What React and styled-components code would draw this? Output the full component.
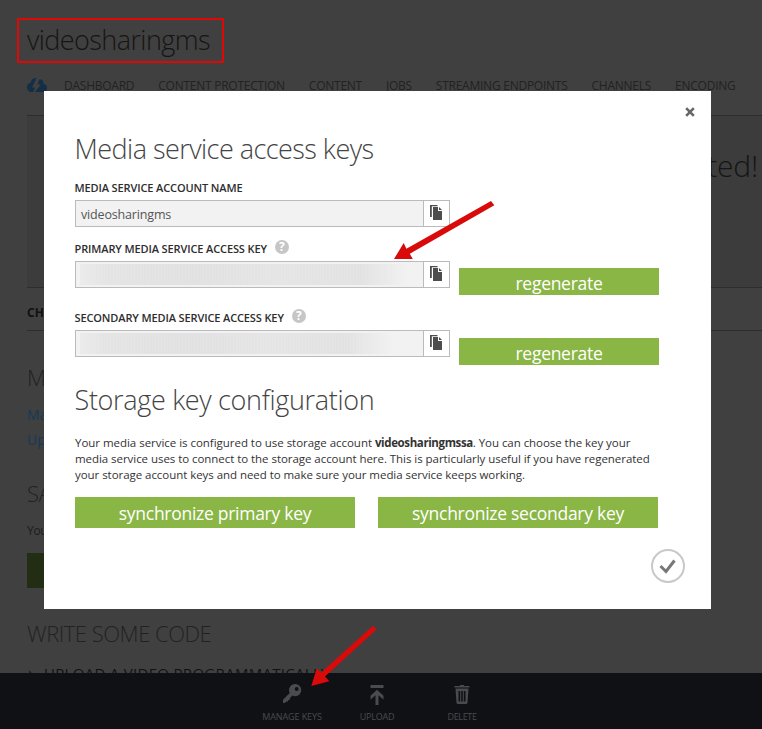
import React from 'react';
import styled, { createGlobalStyle } from 'styled-components';

const GlobalStyle = createGlobalStyle`
  * { box-sizing: border-box; }
  body { margin: 0; background: #404040; }
  h1, h2, h3, p { margin: 0; font-weight: inherit; }
  button { font: inherit; letter-spacing: inherit; border: 0; padding: 0; background: none; }
`;

const Screen = styled.div`
  position: relative;
  width: 762px;
  height: 729px;
  overflow: hidden;
  display: flex;
  flex-direction: column;
  background: #404040;
  color: #1c1c1c;
  font-family: "Open Sans", "Noto Sans", sans-serif;
  white-space: nowrap;
`;

const Page = styled.main`
  height: 673px;
  padding: 19px 0 0 27px;
  overflow: hidden;
`;

const PageTitle = styled.h1`
  font-size: 27px;
  font-weight: 300;
  line-height: 41px;
  letter-spacing: -0.58px;
  color: #151515;
`;

const Nav = styled.nav`
  display: flex;
  align-items: center;
  gap: 24px;
  height: 20px;
  margin-top: 15px;
  font-size: 12px;
  letter-spacing: -0.25px;
  color: #222;
`;

const CloudIcon = styled.svg`
  width: 20px;
  height: 14px;
  margin-right: -7px;
`;

const Banner = styled.section`
  display: flex;
  justify-content: flex-end;
  height: 173px;
  margin-top: 20px;
  padding: 29px 4px 0 0;
  border: solid #2d2d2d;
  border-width: 1px 0;
  background: #3c3c3c;
  font-size: 30px;
  font-weight: 300;
  line-height: 42px;
  letter-spacing: -0.2px;
  color: #151515;
`;

const TabHeading = styled.div`
  height: 43px;
  padding-top: 17px;
  border-bottom: 1px solid #2d2d2d;
  font-size: 12px;
  font-weight: 700;
  line-height: 16px;
  color: #111;
`;

const SectionTitle = styled.h2`
  margin-top: ${(p) => p.$top}px;
  font-size: 22px;
  font-weight: 300;
  line-height: 30px;
  letter-spacing: -0.48px;
  color: #222;
`;

const Links = styled.div`
  display: flex;
  flex-direction: column;
  margin-top: 10px;
  font-size: 14px;
  line-height: 25px;
  color: #143a55;
`;

const Note = styled.p`
  margin-top: 15px;
  font-size: 12px;
  line-height: 16px;
  letter-spacing: -0.3px;
`;

const DimmedButton = styled.div`
  width: 200px;
  height: 35px;
  margin-top: 14px;
  background: #232d13;
`;

const Expander = styled.div`
  display: flex;
  align-items: center;
  gap: 11px;
  height: 20px;
  margin-top: 15px;
  font-size: 15px;
  letter-spacing: 0.3px;
  color: #111;
`;

const Triangle = styled.svg`
  width: 6px;
  height: 8px;
`;

const CommandBar = styled.footer`
  display: flex;
  height: 56px;
  padding-left: 249.5px;
  background: #101115;
`;

const Command = styled.div`
  display: flex;
  flex-direction: column;
  align-items: center;
  width: 85px;
  padding-top: 10px;
  font-size: 9px;
  line-height: 13px;
  letter-spacing: ${(p) => p.$spacing}px;
  color: #4a4b4d;
  svg { width: 22px; height: 24px; margin: 0 1px 3px 0; }
`;

const Dialog = styled.section`
  position: absolute;
  left: 44px;
  top: 91px;
  width: 667px;
  height: 518px;
  padding: 0 26px 0 31px;
  background: #fff;
  color: #333;
`;

const CloseRow = styled.div`
  display: flex;
  justify-content: flex-end;
  align-items: flex-start;
  height: 39px;
  padding-top: 16px;
  svg { width: 10px; height: 10px; margin-right: -10px; }
`;

const DialogTitle = styled.h2`
  margin-top: ${(p) => p.$top || 0}px;
  font-size: 27px;
  font-weight: 300;
  line-height: 38px;
  letter-spacing: ${(p) => p.$spacing}px;
  text-indent: -0.5px;
  color: #444;
`;

const Label = styled.label`
  display: flex;
  gap: 8px;
  height: 16px;
  margin: ${(p) => p.$top}px 0 4px;
  font-size: 11px;
  font-weight: 600;
  line-height: 16px;
  letter-spacing: -0.12px;
  text-indent: -0.5px;
  color: #2d2d2d;
`;

const HelpBadge = styled.span`
  width: 14px;
  height: 14px;
  margin-top: -1px;
  border-radius: 50%;
  background: #c6c6c6;
  color: #fff;
  font-size: 12px;
  font-weight: 700;
  line-height: 14px;
  text-align: center;
  text-indent: 0;
`;

const FieldRow = styled.div`
  display: flex;
  align-items: flex-start;
  gap: 9px;
`;

const Field = styled.div`
  display: flex;
  width: 375px;
  height: 27px;
  border: 1px solid #bbb;
`;

const Value = styled.div`
  flex: 1;
  padding: 2px 0 0 5px;
  background: #f2f2f2;
  font-size: 12.5px;
  line-height: 23px;
  letter-spacing: -0.16px;
  color: #555;
`;

const Redacted = styled.div`
  width: ${(p) => p.$width}px;
  height: 21px;
  margin-left: -1px;
  background:
    repeating-linear-gradient(90deg, rgba(255,255,255,.07) 0 1px, transparent 1px 3px),
    linear-gradient(90deg, #ebebeb, #e4e4e4 8%, #e1e1e1 35%, #e5e5e5 60%, #e2e2e2 85%, #f2f2f2);
`;

const CopyButton = styled.button`
  display: flex;
  width: 26px;
  padding: 4px 0 0 6px;
  border-left: 1px solid #bbb;
  background: #fff;
  svg { width: 13px; height: 16px; }
`;

const GreenButton = styled.button`
  width: ${(p) => p.$width}px;
  height: ${(p) => p.$height}px;
  margin-top: ${(p) => p.$top || 0}px;
  padding-top: ${(p) => p.$drop || 0}px;
  background: #8ab645;
  color: #fff;
  font-size: 17.5px;
  line-height: 27px;
  letter-spacing: -0.28px;
`;

const Description = styled.p`
  margin-top: 16px;
  font-size: 11.5px;
  line-height: 16px;
  letter-spacing: -0.05px;
  color: #333;
  strong { letter-spacing: -0.38px; }
`;

const FirstLine = styled.span`
  letter-spacing: -0.03px;
`;

const SyncRow = styled.div`
  display: flex;
  gap: 23px;
  margin-top: 14px;
`;

const ConfirmRow = styled.div`
  display: flex;
  justify-content: flex-end;
  margin-top: 21px;
  svg { width: 34px; height: 34px; }
`;

const Annotations = styled.svg`
  position: absolute;
  inset: 0;
  width: 762px;
  height: 729px;
  pointer-events: none;
`;

const NAV_ITEMS = ['DASHBOARD', 'CONTENT PROTECTION', 'CONTENT', 'JOBS', 'STREAMING ENDPOINTS', 'CHANNELS', 'ENCODING'];

const CopyIcon = () => (
  <svg viewBox="0 0 13 16">
    <path d="M0 0h7.500v1.200H1.800V12H0z" fill="#4d4d4d" />
    <path d="M3 2h5v4h4v9H3z" fill="#4d4d4d" />
    <path d="M9 2l3 3H9z" fill="#4d4d4d" />
  </svg>
);

const KeyIcon = () => (
  <svg viewBox="0 0 22 24">
    <path fillRule="evenodd" fill="#4a4b4d" d="M14.200 1a6.100 6.100 0 0 1 0 12.200c-1 0-1.900-.2-2.700-.6L8.800 15.300v1.600H7.100v1.700H5.400L3.900 20H2v-3.300l6.700-6.600a6.200 6.200 0 0 1 5.500-9.100zM15.700 3.900a2 2 0 1 0 0 4 2 2 0 0 0 0-4z" />
  </svg>
);

const UploadIcon = () => (
  <svg viewBox="0 0 22 24">
    <path fill="#4a4b4d" d="M4.500 2h13v3h-13zM11 6.800l6.500 6v4l-5-4.600V22H9.500v-9.800l-5 4.600v-4z" />
  </svg>
);

const TrashIcon = () => (
  <svg viewBox="0 0 22 24">
    <path fillRule="evenodd" fill="#4a4b4d" d="M9 2h4v1h5.500v1.400h-15V3H9zM4.500 5.500h13l-1 14.200q-.2 1.300-1.500 1.300H7q-1.300 0-1.500-1.300zM7.500 8v10.500h1.700V8zM10.200 8v10.500h1.600V8zM12.800 8v10.500h1.700V8z" />
  </svg>
);

function CopyField({ children }) {
  return (
    <Field>
      <Value>{children}</Value>
      <CopyButton aria-label="Copy"><CopyIcon /></CopyButton>
    </Field>
  );
}

export default function App() {
  return (
    <Screen>
      <GlobalStyle />
      <Page>
        <PageTitle>videosharingms</PageTitle>
        <Nav>
          <CloudIcon viewBox="0 0 20 14">
            <path fill="#142f45" d="M9.500 0C6 0 3.800 1.800 4 4.500 1.500 5 0 6.700 0 9.200 0 12 1.800 14 4.500 14H6.300L8 9.500H5.200z" />
            <path fill="#142f45" d="M12.500 1.200c2.800 0 4.300 2 4 4.600C18.700 6.200 20 7.700 20 9.800c0 2.600-1.500 4.200-3.600 4.200H7.800L13.800 6.500h-3.400z" />
          </CloudIcon>
          {NAV_ITEMS.map((item) => <span key={item}>{item}</span>)}
        </Nav>
        <Banner>ted!</Banner>
        <TabHeading>CH</TabHeading>
        <SectionTitle $top={31}>M</SectionTitle>
        <Links><span>Ma</span><span>Up</span></Links>
        <SectionTitle $top={26}>SA</SectionTitle>
        <Note>You</Note>
        <DimmedButton />
        <SectionTitle $top={30}>WRITE SOME CODE</SectionTitle>
        <Expander>
          <Triangle viewBox="0 0 6 8"><path d="M2 1l3 3-3 3z" fill="#222" /></Triangle>
          <span>UPLOAD A VIDEO PROGRAMMATICALLY</span>
        </Expander>
      </Page>
      <CommandBar>
        <Command $spacing={-0.1}><KeyIcon />MANAGE KEYS</Command>
        <Command $spacing={-0.25}><UploadIcon />UPLOAD</Command>
        <Command $spacing={-0.35}><TrashIcon />DELETE</Command>
      </CommandBar>

      <Dialog>
        <CloseRow>
          <svg viewBox="0 0 10 10"><path d="M1.200 1.200l7.600 7.600M8.800 1.200l-7.600 7.600" stroke="#666" strokeWidth="2.600" /></svg>
        </CloseRow>
        <DialogTitle $spacing={-0.54}>Media service access keys</DialogTitle>
        <Label $top={12}>MEDIA SERVICE ACCOUNT NAME</Label>
        <FieldRow><CopyField>videosharingms</CopyField></FieldRow>
        <Label $top={14}>PRIMARY MEDIA SERVICE ACCESS KEY<HelpBadge>?</HelpBadge></Label>
        <FieldRow>
          <CopyField><Redacted $width={330} /></CopyField>
          <GreenButton $width={200} $height={27} $top={7} $drop={2}>regenerate</GreenButton>
        </FieldRow>
        <Label $top={15}>SECONDARY MEDIA SERVICE ACCESS KEY<HelpBadge>?</HelpBadge></Label>
        <FieldRow>
          <CopyField><Redacted $width={314} /></CopyField>
          <GreenButton $width={200} $height={27} $top={8} $drop={2}>regenerate</GreenButton>
        </FieldRow>
        <DialogTitle $top={16} $spacing={-0.33}>Storage key configuration</DialogTitle>
        <Description>
          <FirstLine>Your media service is configured to use storage account </FirstLine><strong>videosharingmssa</strong>. You can choose the key your<br />
          media service uses to connect to the storage account here. This is particularly useful if you have regenerated<br />
          your storage account keys and need to make sure your media service keeps working.
        </Description>
        <SyncRow>
          <GreenButton $width={280} $height={31} $drop={1}>synchronize primary key</GreenButton>
          <GreenButton $width={280} $height={31} $drop={1}>synchronize secondary key</GreenButton>
        </SyncRow>
        <ConfirmRow>
          <svg viewBox="0 0 34 34">
            <circle cx="17" cy="17" r="16" fill="none" stroke="#c8c8c8" strokeWidth="2" />
            <path d="M9.500 17l5.500 5.500 8.500-11" fill="none" stroke="#777" strokeWidth="3" />
          </svg>
        </ConfirmRow>
      </Dialog>

      <Annotations viewBox="0 0 762 729">
        <rect x="18" y="19" width="205" height="43" fill="none" stroke="#e00707" strokeWidth="2" />
        <path fill="#d90a0a" d="M394 259l9.700-16 2.700 5.800L491 201l3.300 4.300-84.500 48.500 3 5.200z" />
        <path fill="#d90a0a" d="M311.300 686l5.400-17.500 4.400 4L373 625.700l3.500 3.800-51.500 47 4.300 4.800z" />
      </Annotations>
    </Screen>
  );
}
